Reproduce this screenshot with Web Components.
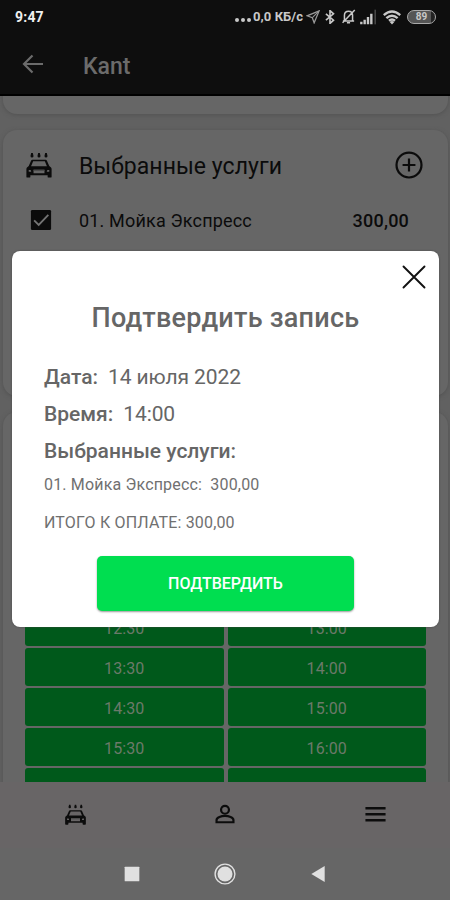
<!DOCTYPE html>
<html lang="ru">
<head>
<meta charset="UTF-8">
<title>Kant</title>
<style>
  body {
    margin: 0;
    font-family: Roboto, "Liberation Sans", sans-serif;
    background: #666;
  }
</style>
</head>
<body>
<booking-screen></booking-screen>

<script>
const icons = {
  back: '<path d="M22 12H3.500M11.500 3.500L3 12l8.500 8.500" fill="none" stroke="currentColor" stroke-width="2.200"/>',
  carWash: `
    <path fill="currentColor" fill-rule="evenodd" d="M6.300 7.500h11.400q.8 0 1.100.8l2 4.600 1.500 1.300q.5.500.5 1.200V22q0 .8-.8.8h-1.800q-.8 0-.8-.8v-1.300H4.600V22q0 .8-.8.8H2q-.8 0-.8-.8v-6.600q0-.7.500-1.200l1.500-1.300 2-4.600q.3-.8 1.100-.8zM7 8.800l-1.800 4.200h13.600L17 8.800zM3.200 16.300v1.500h2.200l-.6-1.500zm17.600 0h-1.600l-.6 1.500h2.200zM7.300 16v3h9.400v-3z"/>
    <path fill="#484848" d="M7.300 16h9.400v1H7.300z"/>
    <path fill="currentColor" d="M5.300 1.800h1.400l.6 2.400q0 1.300-1.300 1.300T4.700 4.200zM11.300 1.800h1.400l.6 2.400q0 1.300-1.300 1.300t-1.300-1.300zM17.300 1.800h1.400l.6 2.400q0 1.300-1.300 1.300t-1.300-1.300z"/>`,
  plus: '<path d="M12 6.500v11M6.500 12h11" stroke="currentColor" stroke-width="1.900"/><circle cx="12" cy="12" r="10.700" fill="none" stroke="currentColor" stroke-width="1.900"/>',
  check: '<rect x="1" y="1" width="22" height="22" rx="1.5" fill="currentColor"/><path d="M4.5 12.3l5 5L20 6.3" fill="none" stroke="#747474" stroke-width="2"/>',
  close: '<path d="M1.500 1.500l21 21M22.500 1.500l-21 21" stroke="currentColor" stroke-width="1.900" stroke-linecap="round"/>',
  person: '<circle cx="12" cy="7.4" r="4.3" fill="none" stroke="currentColor" stroke-width="2.4"/><path d="M2.800 21v-2.400c0-3 5.200-4.500 9.200-4.500s9.200 1.500 9.200 4.500V21z" fill="none" stroke="currentColor" stroke-width="2.4"/>',
  menu: '<path d="M1.500 5.500h21M1.500 11.700h21M1.500 18h21" stroke="currentColor" stroke-width="2.500"/>',
  square: '<rect x="1" y="1" width="22" height="22" rx="1" fill="currentColor"/>',
  home: '<circle cx="12" cy="12" r="10.8" fill="none" stroke="currentColor" stroke-width="1.5"/><circle cx="12" cy="12" r="8.2" fill="currentColor"/>',
  triangle: '<path d="M2 12L22 0v24z" fill="currentColor"/>',
  location: '<path d="M22.5 1.5L14 22l-3.2-8.8L2 10z" fill="none" stroke="currentColor" stroke-width="2.2"/><path d="M22 2L11 13" stroke="currentColor" stroke-width="1.8"/>',
  bluetooth: '<path d="M5 6.5l13 11L12 23V1l6 5.5-13 11" fill="none" stroke="currentColor" stroke-width="2.8"/>',
  mute: '<path d="M3 19h18M5.5 18V10c0-4 3-6.500 6.500-6.500s6.500 2.500 6.500 6.500v8M9.500 22h5M2.500 22L22 1.500" fill="none" stroke="currentColor" stroke-width="2.4"/>',
  signal: '<path d="M2 23v-4M7 23v-7M12 23v-11M17 23V7" stroke="currentColor" stroke-width="3.6"/><path d="M22.700 23V1" stroke="#666" stroke-width="1.500"/>',
  wifi: '<path d="M1 9.500q11-9.500 22 0M4.500 13.500q7.500-6.500 15 0M8 17q4-3.500 8 0" fill="none" stroke="currentColor" stroke-width="3.200"/><path d="M9 18.500q3-2.500 6 0L12 22z" fill="currentColor"/>'
};

class AppIcon extends HTMLElement {
  connectedCallback() {
    const size = this.getAttribute('size') || 24;
    this.attachShadow({ mode: 'open' }).innerHTML = `
      <style>
        :host { display: block; flex: none; width: ${size}px; height: ${size}px; }
        svg { display: block; width: 100%; height: 100%; }
      </style>
      <svg viewBox="0 0 24 24">${icons[this.getAttribute('name')]}</svg>
    `;
  }
}

class StatusBar extends HTMLElement {
  constructor() {
    super();
    this.attachShadow({ mode: 'open' }).innerHTML = `
      <style>
        :host {
          display: flex;
          align-items: center;
          box-sizing: border-box;
          height: 33px;
          padding: 0 14px 0 15px;
          background: #0e0e0e;
          color: #c8c8c8;
          font-size: 12.5px;
          font-weight: 700;
        }
        .time { margin-right: auto; color: #f0f0f0; font-size: 14px; letter-spacing: 0.2px; }
        .dots { display: flex; gap: 2px; margin: 7px 2px 0 0; }
        .dots i { width: 4px; height: 4px; border-radius: 50%; background: currentColor; }
        .speed { font-size: 13px; letter-spacing: 0.05px; }
        .battery {
          box-sizing: border-box;
          width: 29px;
          height: 14px;
          border: 1.5px solid #aaa;
          border-radius: 7px;
          font-size: 10px;
          line-height: 11px;
          text-align: center;
          background: linear-gradient(90deg, #555 85%, #222 85%);
        }
      </style>
      <span class="time">9:47</span>
      <span class="dots"><i></i><i></i><i></i></span>
      <span class="speed">0,0 КБ/с</span>
      <app-icon name="location" size="14" style="margin-left:3px;color:#999"></app-icon>
      <app-icon name="bluetooth" size="14" style="margin-left:3px"></app-icon>
      <app-icon name="mute" size="15" style="margin-left:4px"></app-icon>
      <app-icon name="signal" size="16" style="margin-left:4px"></app-icon>
      <app-icon name="wifi" size="18" style="margin-left:7px"></app-icon>
      <span class="battery" style="margin-left:6px">89</span>
    `;
  }
}

class AppHeader extends HTMLElement {
  constructor() {
    super();
    this.attachShadow({ mode: 'open' }).innerHTML = `
      <style>
        :host {
          display: flex;
          align-items: center;
          gap: 38px;
          box-sizing: border-box;
          height: 63px;
          padding-left: 21px;
          background: #0e0e0e;
          border-bottom: 2px solid #000;
          color: #6b6b6b;
          font-size: 23px;
          font-weight: 500;
        }
        span { padding-top: 5px; }
      </style>
      <app-icon name="back" size="24"></app-icon>
      <span><slot></slot></span>
    `;
  }
}

class AppCard extends HTMLElement {
  constructor() {
    super();
    this.attachShadow({ mode: 'open' }).innerHTML = `
      <style>
        :host {
          display: block;
          flex: none;
          box-sizing: border-box;
          margin: 0 2px 0 3px;
          border-radius: 14px;
          background: #666;
          box-shadow: 0 1px 4px 0 #525252;
        }
      </style>
      <slot></slot>
    `;
  }
}

class ServiceList extends HTMLElement {
  constructor() {
    super();
    this.attachShadow({ mode: 'open' }).innerHTML = `
      <style>
        :host { display: block; padding: 17px 39px 0 22px; color: #0b0b0b; }
        .row { display: flex; align-items: center; }
        .title { height: 36px; margin-right: -14px; font-size: 23px; }
        .title span { margin-left: 26px; padding-top: 2px; letter-spacing: 0.04px; }
        .title .add { margin-left: auto; }
        .service { height: 38px; margin-top: 18px; font-size: 18px; }
        .service .name { margin-left: 27px; letter-spacing: 0.17px; }
        .service .price { margin-left: auto; font-weight: 500; letter-spacing: 0.2px; }
      </style>
      <div class="row title">
        <app-icon name="carWash" size="28"></app-icon>
        <span>Выбранные услуги</span>
        <app-icon class="add" name="plus" size="28"></app-icon>
      </div>
      <div class="row service">
        <app-icon name="check" size="22" style="margin-left:5px"></app-icon>
        <span class="name">01. Мойка Экспресс</span>
        <span class="price">300,00</span>
      </div>
    `;
  }
}

class TimeGrid extends HTMLElement {
  connectedCallback() {
    const times = this.getAttribute('times').split(',');
    this.attachShadow({ mode: 'open' }).innerHTML = `
      <style>
        :host {
          display: grid;
          grid-template-columns: 1fr 1fr;
          grid-auto-rows: 38px;
          gap: 2px 4px;
          padding: 196px 22px 0 22px;
        }
        div {
          display: flex;
          align-items: center;
          justify-content: center;
          padding-top: 3px;
          box-sizing: border-box;
          border-radius: 3px;
          background: #00591b;
          color: #6c796a;
          font-size: 16px;
          letter-spacing: 0.1px;
        }
      </style>
      ${times.map(t => `<div>${t}</div>`).join('')}
    `;
  }
}

class ConfirmDialog extends HTMLElement {
  constructor() {
    super();
    this.attachShadow({ mode: 'open' }).innerHTML = `
      <style>
        :host {
          position: absolute;
          left: 12px;
          top: 251px;
          box-sizing: border-box;
          width: 427px;
          height: 376px;
          padding: 14px 32px 0;
          border-radius: 8px;
          background: #fff;
          color: #666;
          box-shadow: 0 0 2px #444;
        }
        .close { margin: 0 -19px 0 auto; color: #111; }
        h1 {
          margin: 11px 0 0;
          font-size: 27px;
          line-height: 36px;
          font-weight: 500;
          text-align: center;
          letter-spacing: 0.25px;
        }
        .line { font-size: 21px; line-height: 37px; letter-spacing: -0.1px; }
        .line b { font-weight: 500; margin-right: 10px; letter-spacing: 0; }
        .details { margin-top: 23px; }
        .small { font-size: 16px; line-height: 30px; letter-spacing: 0.17px; color: #707070; }
        .total { margin-top: 8px; }
        button {
          display: block;
          width: 257px;
          height: 55px;
          margin: 18px auto 0 53px;
          padding: 0;
          border: none;
          border-radius: 5px;
          background: #00de50;
          color: #fff;
          font: 500 16px Roboto, sans-serif;
          box-shadow: 0 1px 2px #999;
        }
      </style>
      <app-icon class="close" name="close" size="24"></app-icon>
      <h1>Подтвердить запись</h1>
      <div class="details">
        <div class="line"><b>Дата:</b><span>14 июля 2022</span></div>
        <div class="line"><b>Время:</b><span>14:00</span></div>
        <div class="line"><b>Выбранные услуги:</b></div>
        <div class="small">01. Мойка Экспресс:&nbsp; 300,00</div>
        <div class="small total">ИТОГО К ОПЛАТЕ: 300,00</div>
      </div>
      <button>ПОДТВЕРДИТЬ</button>
    `;
  }
}

class TabBar extends HTMLElement {
  constructor() {
    super();
    this.attachShadow({ mode: 'open' }).innerHTML = `
      <style>
        :host {
          display: grid;
          grid-template-columns: repeat(3, 1fr);
          place-items: center;
          height: 64px;
          padding-bottom: 2px;
          background: #686566;
          color: #0c0c0c;
        }
      </style>
      <app-icon name="carWash" size="23"></app-icon>
      <app-icon name="person" size="22"></app-icon>
      <app-icon name="menu" size="23"></app-icon>
    `;
  }
}

class SystemNav extends HTMLElement {
  constructor() {
    super();
    this.attachShadow({ mode: 'open' }).innerHTML = `
      <style>
        :host {
          display: flex;
          align-items: center;
          justify-content: center;
          gap: 74px;
          height: 52px;
          background: #666;
          color: #e0e0e0;
        }
      </style>
      <app-icon name="square" size="16"></app-icon>
      <app-icon name="home" size="22"></app-icon>
      <app-icon name="triangle" size="16"></app-icon>
    `;
  }
}

class BookingScreen extends HTMLElement {
  constructor() {
    super();
    this.attachShadow({ mode: 'open' }).innerHTML = `
      <style>
        :host {
          display: flex;
          flex-direction: column;
          position: relative;
          width: 450px;
          height: 900px;
          overflow: hidden;
        }
        main {
          flex: 1;
          min-height: 0;
          display: flex;
          flex-direction: column;
          gap: 16px;
          overflow: hidden;
          background: #616161;
        }
        .previous { height: 58px; margin-top: -40px; }
        .services { height: 266px; }
        .times { height: 420px; }
      </style>
      <status-bar></status-bar>
      <app-header>Kant</app-header>
      <main>
        <app-card class="previous"></app-card>
        <app-card class="services"><service-list></service-list></app-card>
        <app-card class="times">
          <time-grid times="12:30,13:00,13:30,14:00,14:30,15:00,15:30,16:00,,"></time-grid>
        </app-card>
      </main>
      <tab-bar></tab-bar>
      <system-nav></system-nav>
      <confirm-dialog></confirm-dialog>
    `;
  }
}

customElements.define('app-icon', AppIcon);
customElements.define('status-bar', StatusBar);
customElements.define('app-header', AppHeader);
customElements.define('app-card', AppCard);
customElements.define('service-list', ServiceList);
customElements.define('time-grid', TimeGrid);
customElements.define('confirm-dialog', ConfirmDialog);
customElements.define('tab-bar', TabBar);
customElements.define('system-nav', SystemNav);
customElements.define('booking-screen', BookingScreen);
</script>
</body>
</html>
